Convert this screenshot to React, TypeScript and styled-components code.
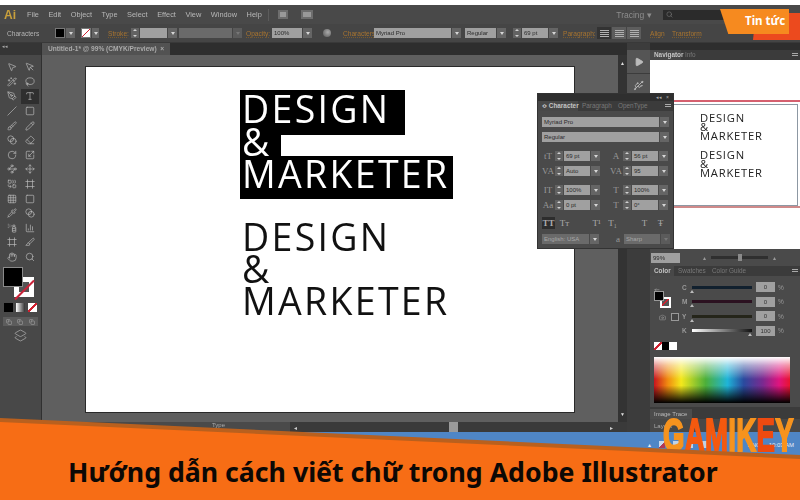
import React from 'react'
import styled, { createGlobalStyle } from 'styled-components'
import {
  MousePointer2, MousePointer, WandSparkles, Lasso, PenTool, Type, Slash, Square, Brush, Pencil, Eraser,
  RotateCw, Scaling, Waypoints, Move, Combine, Grid3x3, Blend, SprayCan, Pipette, ChartColumn, Frame, Slice, Hand,
  Search, Layers2, ArrowLeftRight, Play, Usb, Copy, Camera,
} from 'lucide-react'

const GlobalStyle = createGlobalStyle`
  html, body { margin: 0; padding: 0; background: #fff; }
  * { box-sizing: border-box; }
`

const Page = styled.div`
  position: relative;
  width: 800px;
  height: 500px;
  overflow: hidden;
  display: flex;
  flex-direction: column;
  background: #fff;
  font-family: "Liberation Sans", Arial, sans-serif;
  color: #b4b4b4;
`
const Screen = styled.div`
  margin-top: 5px;
  height: 495px;
  display: flex;
  flex-direction: column;
  filter: blur(0.35px);
  background: #4f86c6;
`
const MenuBar = styled.div`
  height: 19px;
  flex: none;
  display: flex;
  align-items: center;
  background: #494949;
  padding-left: 4px;
  font-size: 7.4px;
`
const Logo = styled.span`
  font-size: 12px;
  font-weight: 700;
  color: #c9a03c;
  margin-right: 11px;
`
const MenuItem = styled.span`
  margin-right: 9.5px;
  color: #b8b8b8;
`
const MenuDivider = styled.i`
  width: 1px;
  height: 12px;
  background: #5c5c5c;
  margin: 0 9px 0 -3px;
`
const LayoutGlyph = styled.i<{ $w: number; $ml: number }>`
  width: ${p => p.$w}px;
  height: 9px;
  margin-left: ${p => p.$ml}px;
  background: #999;
  border: 2px solid #6d6d6d;
`
const Tracing = styled.span`
  margin-left: 303px;
  font-size: 8.5px;
  color: #8d8d8d;
  width: 46px;
`
const SearchBox = styled.div`
  margin-left: 1px;
  width: 80px;
  height: 10px;
  background: #2b2b2b;
  display: flex;
  align-items: center;
  padding-left: 3px;
  color: #777;
`
const ControlBar = styled.div`
  height: 19px;
  flex: none;
  display: flex;
  align-items: center;
  background: #454545;
  border-bottom: 1px solid #393939;
  font-size: 6.6px;
`
const CtlLabel = styled.span<{ $ml: number; $w: number; $orange?: boolean }>`
  margin-left: ${p => p.$ml}px;
  width: ${p => p.$w}px;
  flex: none;
  white-space: nowrap;
  color: ${p => (p.$orange ? '#a8742f' : '#b4b4b4')};
  ${p => p.$orange && 'text-decoration: underline dotted #7b5a2c;'}
`
const Swatch = styled.i<{ $ml: number; $none?: boolean }>`
  width: 10px;
  height: 10px;
  flex: none;
  margin-left: ${p => p.$ml}px;
  border: 1px solid #777;
  background: ${p =>
    p.$none
      ? 'linear-gradient(135deg, #fff 44%, #d0202f 44%, #d0202f 56%, #fff 56%)'
      : '#000'};
`
const Drop = styled.i<{ $ml?: number; $w?: number; $off?: boolean }>`
  width: ${p => p.$w ?? 9}px;
  height: 10px;
  flex: none;
  margin-left: ${p => p.$ml ?? 1}px;
  background: ${p => (p.$off ? '#5b5b5b' : '#656565')};
  position: relative;
  &::after {
    content: '';
    position: absolute;
    left: 50%;
    top: 4px;
    margin-left: -2px;
    border: 2px solid transparent;
    border-top: 3px solid ${p => (p.$off ? '#777' : '#d6d6d6')};
  }
`
const Spin = styled.i<{ $ml?: number }>`
  width: 8px;
  height: 10px;
  flex: none;
  margin-left: ${p => p.$ml ?? 0}px;
  background: #626262;
  position: relative;
  &::before, &::after {
    content: '';
    position: absolute;
    left: 2px;
    border: 2px solid transparent;
  }
  &::before { top: -1px; border-bottom: 2px solid #d0d0d0; }
  &::after { bottom: -1px; border-top: 2px solid #d0d0d0; }
`
const Field = styled.span<{ $ml?: number; $w: number; $dark?: boolean }>`
  width: ${p => p.$w}px;
  height: 10px;
  flex: none;
  margin-left: ${p => p.$ml ?? 0}px;
  padding-left: 2px;
  background: ${p => (p.$dark ? '#6a6a6a' : '#a0a0a0')};
  color: ${p => (p.$dark ? '#a8a8a8' : '#2b2b2b')};
  font-size: 6px;
  line-height: 10px;
  overflow: hidden;
  white-space: nowrap;
`
const Globe = styled.i`
  width: 8px;
  height: 8px;
  margin-left: 11px;
  flex: none;
  border-radius: 50%;
  background: radial-gradient(circle at 60% 40%, #aaa, #555);
`
const AlignGroup = styled.div`
  display: flex;
  margin-left: 4px;
  flex: none;
`
const AlignBtn = styled.i<{ $on?: boolean }>`
  width: 15px;
  height: 12px;
  background: ${p => (p.$on ? '#333' : '#5d5d5d')};
  border-right: 1px solid #454545;
  display: flex;
  align-items: center;
  justify-content: center;
  &::after {
    content: '';
    width: 9px;
    height: 7px;
    background: repeating-linear-gradient(#b0b0b0 0 1px, transparent 1px 2px);
  }
`
const Workspace = styled.div`
  height: 389px;
  flex: none;
  display: flex;
`
const ToolPanel = styled.div`
  width: 42px;
  flex: none;
  background: #484848;
  border-right: 1px solid #303030;
  display: flex;
  flex-direction: column;
`
const ToolHead = styled.div`
  height: 12px;
  background: #353535;
  font-size: 5px;
  color: #aaa;
  padding-left: 2px;
`
const ToolGrid = styled.div`
  display: grid;
  grid-template-columns: 18px 18px;
  grid-auto-rows: 14.6px;
  justify-content: center;
  margin-top: 5px;
`
const ToolCell = styled.div<{ $active?: boolean }>`
  display: flex;
  align-items: center;
  justify-content: center;
  color: #bdbdbd;
  background: ${p => (p.$active ? '#2f2f2f' : 'transparent')};
`
const FillStack = styled.div`
  position: relative;
  height: 33px;
  margin: 3px 0 0 3px;
`
const FillBox = styled.i`
  position: absolute;
  left: 0;
  top: 0;
  width: 20px;
  height: 20px;
  background: #000;
  border: 1px solid #8a8a8a;
  z-index: 1;
`
const StrokeBox = styled.i`
  position: absolute;
  left: 11px;
  top: 10px;
  width: 20px;
  height: 20px;
  border: 5px solid #fff;
  background: #555;
  &::after {
    content: '';
    position: absolute;
    left: -8px;
    top: 7px;
    width: 27px;
    height: 2px;
    background: #c9243a;
    transform: rotate(-45deg);
  }
`
const ModeRow = styled.div`
  display: flex;
  gap: 3px;
  padding: 3px 0 0 4px;
`
const ModeBox = styled.i<{ $kind: 'fill' | 'grad' | 'none' }>`
  width: 9px;
  height: 9px;
  background: ${p =>
    p.$kind === 'fill'
      ? '#000'
      : p.$kind === 'grad'
        ? 'linear-gradient(90deg, #fff, #333)'
        : 'linear-gradient(135deg, #fff 42%, #d0202f 42%, #d0202f 58%, #fff 58%)'};
`
const ScreenRow = styled.div`
  display: flex;
  margin: 5px 0 0 3px;
  width: 35px;
  height: 9px;
  background: #5c5c5c;
  justify-content: space-around;
  align-items: center;
  color: #aaa;
`
const ScreenIcon = styled.div`
  display: flex;
  justify-content: center;
  margin-top: 3px;
  color: #aaa;
`
const DocColumn = styled.div`
  flex: 1;
  min-width: 0;
  display: flex;
  flex-direction: column;
  background: #5e5e5e;
`
const TabBar = styled.div`
  height: 12px;
  flex: none;
  background: #2e2e2e;
`
const DocTab = styled.div`
  width: 128px;
  height: 12px;
  background: #525252;
  font-size: 6.6px;
  font-weight: 700;
  line-height: 12px;
  padding-left: 6px;
  color: #aaa;
  white-space: nowrap;
`
const CanvasRow = styled.div`
  flex: 1;
  min-height: 0;
  display: flex;
`
const Pasteboard = styled.div`
  flex: 1;
  padding: 11px 0 0 43px;
  background: #5f5f5f;
`
const VScroll = styled.div`
  width: 9px;
  flex: none;
  background: #333;
  display: flex;
  flex-direction: column;
  justify-content: space-between;
  align-items: center;
  padding: 5px 0;
  font-size: 5px;
  color: #ddd;
`
const Artboard = styled.div`
  width: 490px;
  height: 347px;
  background: #fff;
  border: 1px solid #2a2a2a;
  padding: 23px 0 0 154px;
  display: flex;
  flex-direction: column;
`
const HighlightLine = styled.div<{ $h: number; $w: number }>`
  height: ${p => p.$h}px;
  width: ${p => p.$w}px;
  background: #000;
  flex: none;
`
const ArtText = styled.div<{ $lift?: number; $spacing?: number; $color: string }>`
  position: relative;
  z-index: 1;
  font-family: "Open Sans", "Noto Sans", sans-serif;
  font-weight: 400;
  font-size: 37.5px;
  line-height: 38px;
  white-space: nowrap;
  letter-spacing: ${p => p.$spacing ?? 2.3}px;
  color: ${p => p.$color};
  margin-top: ${p => p.$lift ?? 0}px;
  padding-left: 2px;
`
const PlainLines = styled.div`
  margin-top: 19px;
  display: flex;
  flex-direction: column;
`
const PlainLine = styled.div`
  height: 32px;
  flex: none;
`
const HBar = styled.div`
  height: 10px;
  flex: none;
  display: flex;
  align-items: center;
  background: #3a3a3a;
  font-size: 6px;
`
const StatusChunk = styled.div`
  width: 248px;
  height: 10px;
  background: #4a4a4a;
  padding-left: 170px;
  color: #aaa;
`
const HTrack = styled.div`
  flex: 1;
  height: 10px;
  display: flex;
  align-items: center;
  padding: 0 14px 0 4px;
  color: #ccc;
  font-size: 6px;
  justify-content: space-between;
`
const HThumb = styled.i`
  width: 9px;
  height: 10px;
  background: #9a9a9a;
`
const Dock = styled.div`
  width: 23px;
  flex: none;
  background: #3c3c3c;
  display: flex;
  flex-direction: column;
  gap: 1px;
  padding-top: 7px;
  color: #bbb;
`
const DockCell = styled.div`
  height: 23px;
  background: #555;
  display: flex;
  align-items: center;
  justify-content: center;
`
const Panels = styled.div`
  width: 150px;
  flex: none;
  display: flex;
  flex-direction: column;
  background: #464646;
`
const PanelHead = styled.div`
  height: 7px;
  flex: none;
  background: #2e2e2e;
`
const PanelTabs = styled.div`
  height: 10px;
  flex: none;
  display: flex;
  align-items: stretch;
  background: #3b3b3b;
  font-size: 6.4px;
  position: relative;
`
const PanelTab = styled.span<{ $active?: boolean; $w: number }>`
  width: ${p => p.$w}px;
  flex: none;
  padding-left: 4px;
  line-height: 10px;
  font-weight: ${p => (p.$active ? 700 : 400)};
  color: ${p => (p.$active ? '#c4c4c4' : '#787878')};
  background: ${p => (p.$active ? '#484848' : 'transparent')};
  white-space: nowrap;
`
const PanelMenu = styled.i`
  position: absolute;
  right: 2px;
  top: 3px;
  width: 6px;
  height: 4px;
  background: repeating-linear-gradient(#aaa 0 1px, transparent 1px 2px);
`
const NavBody = styled.div`
  height: 189px;
  flex: none;
  background: #fff;
  padding-top: 40px;
`
const ProxyFrame = styled.div`
  height: 108px;
  border-top: 2px solid #d5606f;
  border-bottom: 2px solid #cf8a8a;
  padding: 2px 0 0 23px;
`
const Thumb = styled.div`
  width: 125px;
  height: 102px;
  border: 1px solid #8d98a3;
  padding: 8px 0 0 26px;
  color: #222;
  font-family: "Open Sans", "Noto Sans", sans-serif;
  font-size: 11.2px;
  line-height: 9.2px;
  letter-spacing: 0.8px;
`
const ThumbBlock = styled.div`
  margin-bottom: 9.4px;
  white-space: nowrap;
`
const ZoomRow = styled.div`
  height: 17px;
  flex: none;
  display: flex;
  align-items: center;
  padding-left: 1px;
  background: #4a4a4a;
  font-size: 6px;
  color: #999;
`
const ZoomMark = styled.span<{ $ml: number }>`
  margin-left: ${p => p.$ml}px;
`
const ZoomSlider = styled.div`
  width: 57px;
  height: 3px;
  background: #2f2f2f;
  margin-left: 5px;
  position: relative;
  &::after {
    content: '';
    position: absolute;
    left: 27px;
    top: -2px;
    width: 4px;
    height: 7px;
    background: #8a8a8a;
  }
`
const ColorBody = styled.div`
  height: 131px;
  flex: none;
  background: #4a4a4a;
  display: flex;
  flex-direction: column;
  padding: 4px 0 0 4px;
`
const ColorTop = styled.div`
  display: flex;
  height: 58px;
`
const FillCol = styled.div`
  position: relative;
  width: 28px;
  flex: none;
`
const MiniFill = styled.i`
  position: absolute;
  left: 0;
  top: 11px;
  width: 10px;
  height: 10px;
  background: #000;
  border: 1px solid #999;
  z-index: 1;
`
const MiniStroke = styled.i`
  position: absolute;
  left: 6px;
  top: 17px;
  width: 11px;
  height: 11px;
  background: linear-gradient(135deg, #555 40%, #d0202f 40%, #d0202f 55%, #555 55%);
  border: 2px solid #fff;
`
const MiniIcons = styled.div`
  position: absolute;
  left: 5px;
  top: 33px;
  display: flex;
  gap: 5px;
  align-items: center;
  color: #999;
`
const MiniSquare = styled.i`
  width: 8px;
  height: 8px;
  border: 1px solid #999;
  background: #444;
`
const SliderList = styled.div`
  display: flex;
  flex-direction: column;
  gap: 4.6px;
  padding-top: 2px;
`
const SliderRow = styled.div`
  display: flex;
  align-items: center;
  height: 10px;
  font-size: 6.5px;
  font-weight: 700;
  color: #999;
`
const SliderName = styled.span`
  width: 10px;
  flex: none;
`
const SliderTrack = styled.i<{ $tone: string; $thumb: number }>`
  position: relative;
  width: 60px;
  height: 3px;
  flex: none;
  margin-right: 4px;
  background: ${p => p.$tone};
  &::after {
    content: '';
    position: absolute;
    left: ${p => p.$thumb}px;
    top: 2px;
    border: 2px solid transparent;
    border-bottom: 3px solid #bbb;
  }
`
const ValueBox = styled.span`
  width: 19px;
  height: 10px;
  flex: none;
  line-height: 10px;
  text-align: center;
  font-weight: 400;
  font-size: 6px;
  background: #a0a0a0;
  color: #333;
`
const Percent = styled.span`
  margin-left: 3px;
  font-weight: 400;
`
const QuickRow = styled.div`
  display: flex;
  margin-top: 4px;
`
const Quick = styled.i<{ $kind: 'none' | 'black' | 'white' }>`
  width: 7.5px;
  height: 7.5px;
  background: ${p =>
    p.$kind === 'black'
      ? '#000'
      : p.$kind === 'white'
        ? '#fff'
        : 'linear-gradient(135deg, #fff 40%, #d0202f 40%, #d0202f 58%, #fff 58%)'};
`
const Spectrum = styled.div`
  width: 136px;
  height: 46px;
  margin-top: 7px;
  flex: none;
  background:
    linear-gradient(#ffffff 0%, rgba(255,255,255,0.55) 18%, rgba(255,255,255,0) 48%, rgba(0,0,0,0) 62%, #000 100%),
    linear-gradient(90deg, #c8141e 0%, #f08a10 10%, #f4e81c 20%, #4caf3a 38%, #1fb4d8 54%, #2a4a9e 66%, #7a2a90 80%, #e0147e 92%, #e8142e 100%);
`
const TraceTabs = styled.div`
  height: 12px;
  flex: none;
  display: flex;
  align-items: flex-end;
  background: #3b3b3b;
  font-size: 6px;
`
const TraceTab = styled.span`
  width: 42px;
  height: 10px;
  line-height: 10px;
  padding-left: 4px;
  background: #4c4c4c;
  color: #bbb;
`
const LayersRow = styled.div`
  flex: 1;
  background: #484848;
  padding: 4px 0 0 4px;
  font-size: 6px;
  color: #aaa;
`
/* floating character panel, sits over the workspace */
const CharacterPanel = styled.div`
  position: absolute;
  left: 537px;
  top: 93px;
  width: 137px;
  height: 156px;
  background: #4a4a4a;
  border: 1px solid #333;
  font-size: 6.2px;
  display: flex;
  flex-direction: column;
  z-index: 2;
`
const CharTitle = styled.div`
  height: 7px;
  flex: none;
  background: #2f2f2f;
  display: flex;
  justify-content: flex-end;
  padding-right: 4px;
  font-size: 5px;
  line-height: 7px;
  color: #aaa;
  gap: 4px;
`
const CharBody = styled.div`
  padding: 6px 4px 0 4px;
  display: flex;
  flex-direction: column;
`
const FontRow = styled.div`
  display: flex;
  margin-bottom: 6px;
  height: 9px;
`
const CharGrid = styled.div<{ $mt: number }>`
  display: grid;
  grid-template-columns: 64px 64px;
  grid-auto-rows: 15.5px;
  margin-top: ${p => p.$mt}px;
  gap: 0 4px;
`
const CharCell = styled.div`
  display: flex;
  align-items: center;
`
const CharGlyph = styled.span<{ $ml?: number }>`
  width: 12px;
  flex: none;
  margin-left: ${p => p.$ml ?? 0}px;
  font-family: "Liberation Serif", serif;
  font-size: 9px;
  color: #999;
  text-align: center;
`
const StyleRow = styled.div`
  display: flex;
  justify-content: space-between;
  margin-top: 4px;
  height: 12px;
  padding-right: 2px;
  font-family: "Liberation Serif", serif;
  font-size: 9px;
  color: #aaa;
`
const StyleBtn = styled.span<{ $on?: boolean }>`
  width: 13px;
  height: 12px;
  line-height: 12px;
  text-align: center;
  background: ${p => (p.$on ? '#2d2d2d' : 'transparent')};
  font-weight: ${p => (p.$on ? 700 : 400)};
`
const LangRow = styled.div`
  display: flex;
  align-items: center;
  margin-top: 5px;
  height: 10px;
`
/* marketing overlays */
const BadgeRed = styled.div`
  position: absolute;
  left: 753px;
  top: 13px;
  width: 47px;
  height: 27px;
  background: #ec4a1e;
  clip-path: polygon(6% 0, 100% 0, 100% 100%, 0 100%);
  z-index: 3;
`
const Badge = styled.div`
  position: absolute;
  left: 720px;
  top: 9px;
  width: 69px;
  height: 25px;
  background: #f68a1f;
  clip-path: polygon(0 0, 100% 0, 100% 100%, 12% 100%);
  color: #fff;
  font-family: "Noto Sans", sans-serif;
  font-weight: 700;
  font-size: 11.5px;
  line-height: 24px;
  padding-left: 25px;
  white-space: nowrap;
  z-index: 4;
`
const BrandMark = styled.div`
  position: absolute;
  left: 663px;
  top: 412px;
  font-family: "Liberation Sans", Arial, sans-serif;
  font-weight: 700;
  font-size: 46px;
  line-height: 46px;
  letter-spacing: 0.5px;
  transform: scaleX(0.6);
  transform-origin: left top;
  white-space: nowrap;
  z-index: 3;
`
const BrandLetter = styled.span<{ $tone: string }>`
  color: ${p => p.$tone};
  -webkit-text-stroke: 2px ${p => p.$tone};
`
const Tray = styled.div`
  position: absolute;
  left: 648px;
  top: 441px;
  width: 146px;
  display: flex;
  gap: 8px;
  align-items: center;
  color: #e8eef6;
  font-size: 6px;
  z-index: 2;
`
const TrayIcon = styled.i<{ $alert?: boolean }>`
  width: 6px;
  height: 7px;
  background: ${p => (p.$alert ? 'linear-gradient(135deg, #e8eef6 50%, #c9243a 50%)' : '#dfe6ee')};
  opacity: 0.8;
`
const TrayClock = styled.span`
  margin-left: auto;
`
const BannerEdge = styled.div`
  position: absolute;
  left: 0;
  bottom: 0;
  width: 800px;
  height: 82px;
  background: #b9601e;
  clip-path: polygon(0 0, 100% 37px, 100% 100%, 0 100%);
  z-index: 5;
`
const Banner = styled.div`
  position: absolute;
  left: 0;
  bottom: 0;
  width: 800px;
  height: 78px;
  background: #f76d15;
  clip-path: polygon(0 0, 100% 37px, 100% 100%, 0 100%);
  z-index: 6;
  display: flex;
  align-items: flex-end;
  padding: 0 0 10px 68px;
`
const Title = styled.h1`
  margin: 0;
  font-family: "Noto Sans", "Open Sans", sans-serif;
  font-weight: 700;
  font-size: 26.7px;
  line-height: 36px;
  color: #0c0805;
  white-space: nowrap;
`

const menus = ['File', 'Edit', 'Object', 'Type', 'Select', 'Effect', 'View', 'Window', 'Help']

const tools = [
  [MousePointer2, MousePointer], [WandSparkles, Lasso], [PenTool, Type], [Slash, Square], [Brush, Pencil],
  [Blend, Eraser], [RotateCw, Scaling], [Waypoints, Move], [Combine, Frame], [Grid3x3, Square],
  [Pipette, Blend], [SprayCan, ChartColumn], [Frame, Slice], [Hand, Search],
]

const sliders = [
  { name: 'C', tone: '#11202e', value: '0', thumb: -2 },
  { name: 'M', tone: '#2b1120', value: '0', thumb: -2 },
  { name: 'Y', tone: '#25251a', value: '0', thumb: -2 },
  { name: 'K', tone: 'linear-gradient(90deg, #fff, #111)', value: '100', thumb: 56 },
]

const charCells = [
  ['tT', '69 pt'], ['A', '56 pt'], ['VA', 'Auto'], ['VA', '95'],
  ['IT', '100%'], ['T', '100%'], ['Aa', '0 pt'], ['T', '0°'],
]

const brandLetters = [
  ['G', '#f7931e'], ['A', '#f4590f'], ['M', '#f4590f'], ['I', '#f7931e'],
  ['K', '#f7931e'], ['E', '#ee4a10'], ['Y', '#f7931e'],
]

function CharFields({ cells, mt }: { cells: string[][]; mt: number }) {
  return (
    <CharGrid $mt={mt}>
      {cells.map(([glyph, value], i) => (
        <CharCell key={i}>
          <CharGlyph>{glyph}</CharGlyph>
          <Spin $ml={1} />
          <Field $w={26} $ml={1}>{value}</Field>
          <Drop />
        </CharCell>
      ))}
    </CharGrid>
  )
}

function App() {
  return (
    <Page>
      <GlobalStyle />
      <Screen>
        <MenuBar>
          <Logo>Ai</Logo>
          {menus.map(m => <MenuItem key={m}>{m}</MenuItem>)}
          <MenuDivider />
          <LayoutGlyph $w={10} $ml={0} />
          <LayoutGlyph $w={12} $ml={13} />
          <Tracing>Tracing ▾</Tracing>
          <SearchBox><Search size={7} /></SearchBox>
        </MenuBar>

        <ControlBar>
          <CtlLabel $ml={7} $w={48}>Characters</CtlLabel>
          <Swatch $ml={0} />
          <Drop />
          <Swatch $ml={6} $none />
          <Drop $w={7} />
          <CtlLabel $ml={9} $w={23} $orange>Stroke:</CtlLabel>
          <Spin />
          <Field $w={27} $ml={1} />
          <Drop />
          <Field $w={53} $ml={2} $dark />
          <Drop $off />
          <CtlLabel $ml={4} $w={26} $orange>Opacity:</CtlLabel>
          <Field $w={30}>100%</Field>
          <Drop />
          <Globe />
          <CtlLabel $ml={12} $w={31} $orange>Characters:</CtlLabel>
          <Field $w={77}>Myriad Pro</Field>
          <Drop />
          <Field $w={31} $ml={4}>Regular</Field>
          <Drop />
          <Spin $ml={7} />
          <Field $w={26} $ml={1}>69 pt</Field>
          <Drop />
          <CtlLabel $ml={5} $w={30} $orange>Paragraph:</CtlLabel>
          <AlignGroup>
            <AlignBtn $on />
            <AlignBtn />
            <AlignBtn />
          </AlignGroup>
          <CtlLabel $ml={8} $w={22} $orange>Align</CtlLabel>
          <CtlLabel $ml={0} $w={30} $orange>Transform</CtlLabel>
        </ControlBar>

        <Workspace>
          <ToolPanel>
            <ToolHead>◂◂</ToolHead>
            <ToolGrid>
              {tools.flatMap((row, r) =>
                row.map((Icon, c) => (
                  <ToolCell key={`${r}-${c}`} $active={r === 2 && c === 1}>
                    <Icon size={10} strokeWidth={1.6} />
                  </ToolCell>
                )),
              )}
            </ToolGrid>
            <FillStack>
              <FillBox />
              <StrokeBox />
            </FillStack>
            <ModeRow>
              <ModeBox $kind="fill" />
              <ModeBox $kind="grad" />
              <ModeBox $kind="none" />
            </ModeRow>
            <ScreenRow>
              <Copy size={6} />
              <Copy size={6} />
              <Copy size={6} />
            </ScreenRow>
            <ScreenIcon><Layers2 size={13} strokeWidth={1.4} /></ScreenIcon>
          </ToolPanel>

          <DocColumn>
            <TabBar>
              <DocTab>Untitled-1* @ 99% (CMYK/Preview) &nbsp;×</DocTab>
            </TabBar>
            <CanvasRow>
              <Pasteboard>
                <Artboard>
                  <HighlightLine $h={45} $w={165}>
                    <ArtText $color="#fff">DESIGN</ArtText>
                  </HighlightLine>
                  <HighlightLine $h={21} $w={41}>
                    <ArtText $lift={-12} $spacing={0} $color="#fff">&amp;</ArtText>
                  </HighlightLine>
                  <HighlightLine $h={43} $w={213}>
                    <ArtText $lift={-1} $color="#fff">MARKETER</ArtText>
                  </HighlightLine>
                  <PlainLines>
                    <PlainLine><ArtText $color="#111">DESIGN</ArtText></PlainLine>
                    <PlainLine><ArtText $spacing={0} $color="#111">&amp;</ArtText></PlainLine>
                    <PlainLine><ArtText $color="#111">MARKETER</ArtText></PlainLine>
                  </PlainLines>
                </Artboard>
              </Pasteboard>
              <VScroll>
                <span>▲</span>
                <span>▼</span>
              </VScroll>
            </CanvasRow>
            <HBar>
              <StatusChunk>Type</StatusChunk>
              <HTrack>
                <span>◂</span>
                <HThumb />
                <span>▸</span>
              </HTrack>
            </HBar>
          </DocColumn>

          <Dock>
            <DockCell><Play size={10} fill="#bbb" /></DockCell>
            <DockCell><Usb size={11} /></DockCell>
          </Dock>

          <Panels>
            <PanelHead />
            <PanelTabs>
              <PanelTab $active $w={31}>Navigator</PanelTab>
              <PanelTab $w={24}>Info</PanelTab>
              <PanelMenu />
            </PanelTabs>
            <NavBody>
              <ProxyFrame>
                <Thumb>
                  <ThumbBlock>DESIGN<br />&amp;<br />MARKETER</ThumbBlock>
                  <ThumbBlock>DESIGN<br />&amp;<br />MARKETER</ThumbBlock>
                </Thumb>
              </ProxyFrame>
            </NavBody>
            <ZoomRow>
              <Field $w={29} $ml={0}>99%</Field>
              <ZoomMark $ml={23}>▴</ZoomMark>
              <ZoomSlider />
              <ZoomMark $ml={5}>▴</ZoomMark>
            </ZoomRow>
            <PanelTabs>
              <PanelTab $active $w={24}>Color</PanelTab>
              <PanelTab $w={34}>Swatches</PanelTab>
              <PanelTab $w={48}>Color Guide</PanelTab>
              <PanelMenu />
            </PanelTabs>
            <ColorBody>
              <ColorTop>
                <FillCol>
                  <ArrowLeftRight size={6} />
                  <MiniFill />
                  <MiniStroke />
                  <MiniIcons>
                    <Camera size={7} />
                    <MiniSquare />
                  </MiniIcons>
                </FillCol>
                <SliderList>
                  {sliders.map(s => (
                    <SliderRow key={s.name}>
                      <SliderName>{s.name}</SliderName>
                      <SliderTrack $tone={s.tone} $thumb={s.thumb} />
                      <ValueBox>{s.value}</ValueBox>
                      <Percent>%</Percent>
                    </SliderRow>
                  ))}
                </SliderList>
              </ColorTop>
              <QuickRow>
                <Quick $kind="none" />
                <Quick $kind="black" />
                <Quick $kind="white" />
              </QuickRow>
              <Spectrum />
            </ColorBody>
            <TraceTabs><TraceTab>Image Trace</TraceTab></TraceTabs>
            <LayersRow>Layers</LayersRow>
          </Panels>
        </Workspace>
      </Screen>

      <CharacterPanel>
        <CharTitle><span>◂◂</span><span>×</span></CharTitle>
        <PanelTabs>
          <PanelTab $active $w={40}>≎ Character</PanelTab>
          <PanelTab $w={36}>Paragraph</PanelTab>
          <PanelTab $w={40}>OpenType</PanelTab>
          <PanelMenu />
        </PanelTabs>
        <CharBody>
          <FontRow><Field $w={117}>Myriad Pro</Field><Drop /></FontRow>
          <FontRow><Field $w={117}>Regular</Field><Drop /></FontRow>
          <CharFields cells={charCells.slice(0, 4)} mt={1} />
          <CharFields cells={charCells.slice(4)} mt={3} />
          <StyleRow>
            <StyleBtn $on>TT</StyleBtn>
            <StyleBtn>Tт</StyleBtn>
            <StyleBtn />
            <StyleBtn>T¹</StyleBtn>
            <StyleBtn>T₁</StyleBtn>
            <StyleBtn />
            <StyleBtn>T</StyleBtn>
            <StyleBtn>Ŧ</StyleBtn>
          </StyleRow>
          <LangRow>
            <Field $w={47} $dark>English: USA</Field>
            <Drop />
            <CharGlyph $ml={13}>a</CharGlyph>
            <Field $w={36} $dark>Sharp</Field>
            <Drop $off />
          </LangRow>
        </CharBody>
      </CharacterPanel>

      <BadgeRed />
      <Badge>Tin tức</Badge>
      <Tray>
        <span>▴</span>
        <TrayIcon $alert /><TrayIcon /><TrayIcon /><TrayIcon />
        <TrayClock>ENG</TrayClock>
        <span>10:03 AM</span>
      </Tray>
      <BrandMark>
        {brandLetters.map(([letter, tone]) => (
          <BrandLetter key={letter} $tone={tone}>{letter}</BrandLetter>
        ))}
      </BrandMark>
      <BannerEdge />
      <Banner>
        <Title>Hướng dẫn cách viết chữ trong Adobe Illustrator</Title>
      </Banner>
    </Page>
  )
}

export default App
